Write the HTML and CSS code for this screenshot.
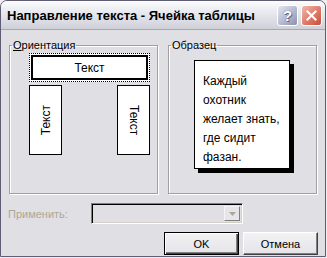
FILE: index.html
```html
<!DOCTYPE html>
<html lang="ru">
<head>
<meta charset="utf-8">
<link rel="stylesheet" href="styles.css">
</head>
<body>
<div class="window">
  <div class="titlebar">
    <span class="title">Направление текста - Ячейка таблицы</span>
    <span class="tbtn help">?</span>
    <span class="tbtn close">
      <svg width="21" height="21" viewBox="0 0 21 21"><path d="M6 6 L15 15 M15 6 L6 15" stroke="#fff" stroke-width="2.2" stroke-linecap="square"/></svg>
    </span>
  </div>
  <div class="client">
    <div class="groups">
      <fieldset class="group">
        <legend><u>О</u>риентация</legend>
        <div class="orient-grid">
          <div class="hbox"><div class="hbox-in">Текст</div></div>
          <div class="vbox up"><span>Текст</span></div>
          <div class="vbox-gap"></div>
          <div class="vbox down"><span>Текст</span></div>
        </div>
      </fieldset>
      <fieldset class="group">
        <legend>Образец</legend>
        <div class="sample-wrap">
          <div class="sample-box">Каждый<br>охотник<br>желает знать,<br>где сидит<br>фазан.</div>
        </div>
      </fieldset>
    </div>
    <div class="apply-row">
      <span class="apply-label">Применить:</span>
      <div class="combo">
        <div class="combo-btn">
          <svg width="7" height="4" viewBox="0 0 7 4"><path d="M0 0 H7 L3.5 4 Z" fill="#aca899"/></svg>
        </div>
      </div>
    </div>
    <div class="buttons">
      <button class="btn default"><span>OK</span></button>
      <button class="btn"><span>Отмена</span></button>
    </div>
  </div>
</div>
</body>
</html>
```
FILE: styles.css
```css
html, body {
  margin: 0;
  padding: 0;
  background: #eeeef2;
}
body {
  font-family: "Liberation Sans", Arial, sans-serif;
  font-size: 11px;
  color: #000;
}
.window {
  width: 326px;
  height: 257px;
  box-sizing: border-box;
  border: 1px solid #5f5d74;
  border-radius: 7px 7px 0 0;
  background: #e0dfe3;
  display: flex;
  flex-direction: column;
  overflow: hidden;
}
.titlebar {
  height: 28px;
  flex: none;
  display: flex;
  align-items: center;
  padding: 0 3px 0 6px;
  background: linear-gradient(#fdfdfe 0%, #eceef2 30%, #dcdde4 70%, #cfd0d8 100%);
  border-bottom: 1px solid #a7a6b6;
}
.title {
  flex: 1;
  font-weight: bold;
  font-size: 13px;
  color: #000;
}
.tbtn {
  width: 21px;
  height: 21px;
  box-sizing: border-box;
  border-radius: 3px;
  border: 1px solid #fff;
  display: flex;
  align-items: center;
  justify-content: center;
  margin-left: 3px;
}
.help {
  background: linear-gradient(135deg, #e4e6f2 0%, #b5b8cf 55%, #8c90ae 100%);
  color: #fff;
  font-weight: bold;
  font-size: 15px;
  text-shadow: 0 0 1px #4a4d6b, 1px 1px 0 #6a6d8b;
}
.close {
  background: linear-gradient(135deg, #f3b8ad 0%, #dd7a68 55%, #c2503d 100%);
}
.client {
  flex: 1;
  padding: 9px 7px 0 8px;
  display: flex;
  flex-direction: column;
}
.groups {
  display: flex;
  gap: 10px;
}
.group {
  width: 149px;
  height: 155px;
  box-sizing: border-box;
  margin: 0;
  padding: 0;
  min-width: 0;
  border: 1px solid #a09fa6;
  box-shadow: 1px 1px 0 #fff, inset 1px 1px 0 #fff;
}
.group legend {
  padding: 0 1px;
  margin-left: 2px;
  line-height: 13px;
}
.orient-grid {
  display: grid;
  grid-template-columns: 33px 55px 33px;
  grid-template-rows: 29px 70px;
  row-gap: 3px;
  padding: 1px 0 0 19px;
}
.hbox {
  grid-column: 1 / 4;
  border: 1px dotted #000;
  padding: 1px;
  background: #fff;
  box-sizing: border-box;
}
.hbox-in {
  height: 100%;
  box-sizing: border-box;
  border: 2px solid #000;
  display: flex;
  align-items: center;
  justify-content: center;
  font-size: 12px;
}
.vbox {
  border: 1px solid #000;
  background: #fff;
  display: flex;
  align-items: center;
  justify-content: center;
  font-size: 12px;
}
.vbox span {
  writing-mode: vertical-rl;
}
.vbox.up span {
  transform: rotate(180deg);
}
.sample-wrap {
  padding: 8px 0 0 25px;
}
.sample-box {
  width: 96px;
  height: 109px;
  box-sizing: border-box;
  border: 1px solid #000;
  background: #fff;
  box-shadow: 4px 4px 0 #000;
  padding: 11px 0 0 8px;
  line-height: 19px;
  font-size: 12px;
}
.apply-row {
  display: flex;
  align-items: center;
  margin-top: 9px;
  height: 21px;
}
.apply-label {
  width: 83px;
  margin-left: -1px;
  color: #aca899;
}
.combo {
  width: 152px;
  height: 21px;
  box-sizing: border-box;
  border-top: 1px solid #808080;
  border-left: 1px solid #808080;
  border-right: 1px solid #fff;
  border-bottom: 1px solid #fff;
  box-shadow: inset 1px 1px 0 #000, inset -1px -1px 0 #d4d0c8;
  display: flex;
  justify-content: flex-end;
  padding: 2px 2px 2px 0;
}
.combo-btn {
  width: 16px;
  height: 100%;
  box-sizing: border-box;
  background: #e6e5ea;
  border-top: 1px solid #f4f4f6;
  border-left: 1px solid #f4f4f6;
  border-right: 1px solid #808080;
  border-bottom: 1px solid #808080;
  display: flex;
  align-items: center;
  justify-content: center;
}
.buttons {
  display: flex;
  justify-content: flex-end;
  gap: 4px;
  margin-top: 8px;
}
.btn {
  width: 75px;
  height: 23px;
  box-sizing: border-box;
  margin: 0;
  padding: 0;
  font-family: "Liberation Sans", Arial, sans-serif;
  font-size: 11px;
  color: #000;
  background: linear-gradient(#f2f2f4, #e4e3e8);
  border-top: 1px solid #fff;
  border-left: 1px solid #fff;
  border-right: 1px solid #404040;
  border-bottom: 1px solid #404040;
  box-shadow: inset -1px -1px 0 #808080;
}
.btn.default {
  border: 1px solid #000;
  box-shadow: inset 1px 1px 0 #fff, inset -1px -1px 0 #404040, inset -2px -2px 0 #808080;
}
```
